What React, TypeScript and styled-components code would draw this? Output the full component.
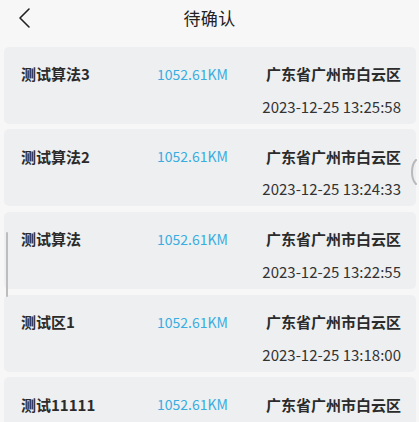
import styled, { createGlobalStyle } from "styled-components";

const GlobalStyle = createGlobalStyle`
  html, body {
    margin: 0;
    padding: 0;
    background: #f7f7f8;
  }
  body {
    font-family: "Noto Sans CJK SC", "Noto Sans", sans-serif;
    overflow: hidden;
  }
`;

const items: { name: string; time?: string }[] = [
  { name: "测试算法3", time: "2023-12-25 13:25:58" },
  { name: "测试算法2", time: "2023-12-25 13:24:33" },
  { name: "测试算法", time: "2023-12-25 13:22:55" },
  { name: "测试区1", time: "2023-12-25 13:18:00" },
  { name: "测试11111" },
];

const App: React.FC = () => {
  return (
    <Page>
      <GlobalStyle />
      <Header>
        <Back aria-label="back">
          <svg width="14" height="22" viewBox="0 0 14 22">
            <path d="M12 2 L3 11 L12 20" fill="none" stroke="#222" strokeWidth="1.6" strokeLinecap="round" strokeLinejoin="round" />
          </svg>
        </Back>
        <Title>待确认</Title>
      </Header>
      <List>
        {items.map((item, index) => (
          <Card key={index}>
            <TopRow>
              <Name>{item.name}</Name>
              <Distance>1052.61KM</Distance>
              <Address>广东省广州市白云区</Address>
            </TopRow>
            {item.time && <Time>{item.time}</Time>}
          </Card>
        ))}
      </List>
      <LeftScroll />
      <RightScroll width="6" height="26" viewBox="0 0 6 26">
        <path d="M5 1 Q1 5 1 13 Q1 21 5 25" fill="none" stroke="#b9b9bb" strokeWidth="2" strokeLinecap="round" />
      </RightScroll>
    </Page>
  );
};

export default App;

const Page = styled.div`
  position: relative;
  width: 419px;
  height: 422px;
  overflow: hidden;
  background: #f7f7f8;
`;

const Header = styled.div`
  position: relative;
  height: 46px;
  display: flex;
  align-items: center;
  justify-content: center;
`;

const Back = styled.div`
  position: absolute;
  left: 14px;
  top: 6px;
  width: 20px;
  height: 24px;
  display: flex;
  align-items: center;
  justify-content: center;
`;

const Title = styled.div`
  margin-top: -12px;
  font-size: 17px;
  color: #222;
  letter-spacing: 0.3px;
`;

const List = styled.div`
  display: flex;
  flex-direction: column;
  gap: 5.7px;
  padding: 0.5px 3px 0 4px;
`;

const Card = styled.div`
  flex: none;
  height: 77px;
  box-sizing: border-box;
  padding: 15px 15px 0 17px;
  background: #eeeff1;
  border-radius: 5px;
  display: flex;
  flex-direction: column;
`;

const TopRow = styled.div`
  display: grid;
  grid-template-columns: 136px auto 1fr;
  align-items: center;
  height: 24px;
`;

const Name = styled.div`
  font-size: 15px;
  font-weight: 700;
  color: #2b2b2b;
`;

const Distance = styled.div`
  font-size: 14px;
  color: #38ade0;
`;

const Address = styled.div`
  text-align: right;
  font-size: 15px;
  font-weight: 700;
  color: #2b2b2b;
`;

const Time = styled.div`
  margin-top: 9px;
  height: 24px;
  line-height: 24px;
  text-align: right;
  font-size: 15px;
  color: #333;
`;

const LeftScroll = styled.div`
  position: absolute;
  left: 6px;
  top: 232px;
  width: 2px;
  height: 65px;
  border-radius: 1px;
  background: #bdbdbf;
`;

const RightScroll = styled.svg`
  position: absolute;
  left: 411px;
  top: 159px;
`;
